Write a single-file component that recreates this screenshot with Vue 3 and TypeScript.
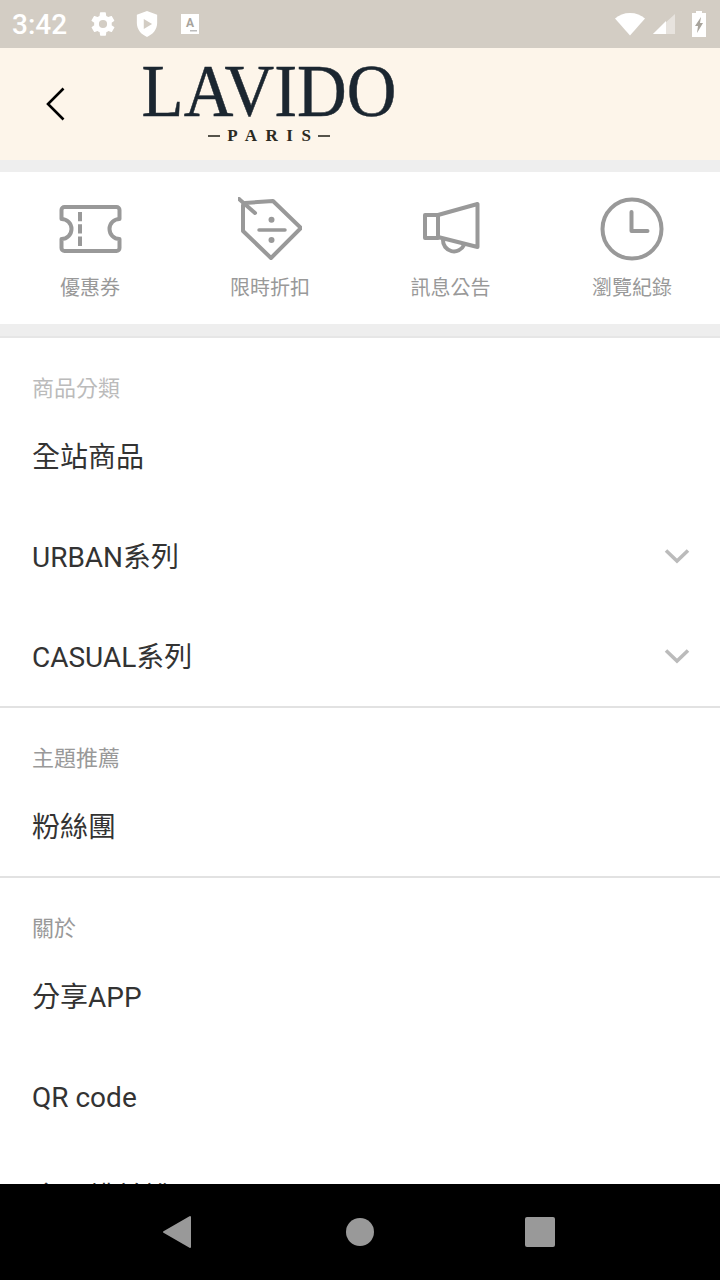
<template>
  <div class="screen">
    <div class="status-bar">
      <span class="clock">3:42</span>
      <svg class="st-icon" width="28" height="28" viewBox="0 0 24 24"><path fill="#fff" fill-rule="evenodd" d="M19.4 13c.1-.3.1-.7.1-1s0-.7-.1-1l2.1-1.6c.2-.2.2-.4.1-.6l-2-3.5c-.1-.2-.4-.3-.6-.2l-2.5 1c-.5-.4-1.100-.7-1.700-1L14.400 2.400c0-.2-.2-.4-.5-.4h-4c-.2 0-.4.2-.5.4l-.4 2.700c-.6.2-1.100.6-1.700 1l-2.500-1c-.2-.1-.5 0-.6.2l-2 3.500c-.1.2-.1.5.1.6L4.500 11c0 .3-.1.7-.1 1s0 .7.1 1l-2.100 1.600c-.2.2-.2.4-.1.6l2 3.500c.1.2.4.3.6.2l2.500-1c.5.4 1.100.7 1.700 1l.4 2.700c0 .2.2.4.5.4h4c.2 0 .5-.2.5-.4l.4-2.700c.6-.2 1.100-.6 1.700-1l2.500 1c.2.1.5 0 .6-.2l2-3.500c.1-.2.1-.5-.1-.6L19.400 13zM12 15.500a3.500 3.500 0 1 1 0-7 3.500 3.500 0 0 1 0 7z"/></svg>
      <svg class="st-icon shield" width="24" height="30" viewBox="0 0 26 30"><path fill="#fff" fill-rule="evenodd" d="M13 1 2 5v9c0 7 4.700 12.500 11 15 6.300-2.500 11-8 11-15V5L13 1zM9.500 9.500 18.500 15l-9 5.500v-11z"/></svg>
      <svg class="st-icon" width="18" height="20" viewBox="0 0 18 20"><rect width="18" height="20" fill="#fff"/><text x="9" y="13" text-anchor="middle" class="glyph-a">A</text><rect x="9" y="16" width="7" height="1.500" fill="#bbb"/></svg>
      <div class="st-right">
        <svg width="32" height="24" viewBox="0 0 32 24"><path fill="#fff" d="M16 23.500 1 6.500C5 3 10 1 16 1s11 2 15 5.500L16 23.500z"/></svg>
        <svg width="24" height="22" viewBox="0 0 24 22"><path fill="#fff" fill-opacity=".45" d="M23 1v20H1L23 1z"/><path fill="#fff" d="M1 21 14 8v13z"/></svg>
        <svg class="battery" width="14" height="28" viewBox="0 0 14 28"><path fill="#fff" d="M4 1h6v2h4v24H0V3h4V1z"/><path fill="#a8a49c" d="M9 7 3 16h3l-1 7 6-10H8l1-6z"/></svg>
      </div>
    </div>

    <header class="top-bar">
      <svg class="back" width="20" height="34" viewBox="0 0 20 34"><path d="M17.500 1.500 2 17l15.500 15.500" fill="none" stroke="#000" stroke-width="2.600"/></svg>
      <div class="logo">
        <div class="logo-main">LAVIDO</div>
        <div class="logo-sub"><i></i><span>PARIS</span><i></i></div>
      </div>
    </header>

    <nav class="shortcuts">
      <div class="shortcut">
        <svg width="64" height="64" viewBox="0 0 64 64" fill="none" stroke="#999" stroke-width="4" stroke-linejoin="round">
          <path d="M6 10h52a3 3 0 0 1 3 3v9a10 10 0 0 0 0 20v9a3 3 0 0 1-3 3H6a3 3 0 0 1-3-3v-9a10 10 0 0 0 0-20v-9a3 3 0 0 1 3-3z" transform="translate(.5 0)"/>
          <path d="M22 15v34" stroke-dasharray="9.300 3"/>
        </svg>
        <span>優惠券</span>
      </div>
      <div class="shortcut">
        <svg width="64" height="64" viewBox="0 0 64 64" fill="none" stroke="#999" stroke-width="4" stroke-linecap="round" stroke-linejoin="round">
          <path d="M1 2 17 16"/>
          <path d="M7 6 35 4 63 31 33 61 5 34V8"/>
          <path d="M21 33h26" stroke-width="3.500"/>
          <circle cx="33.500" cy="22.700" r="3" fill="#999" stroke="none"/>
          <circle cx="33.500" cy="43" r="3" fill="#999" stroke="none"/>
        </svg>
        <span>限時折扣</span>
      </div>
      <div class="shortcut">
        <svg width="64" height="64" viewBox="0 0 64 64" fill="none" stroke="#999" stroke-width="4" stroke-linejoin="round">
          <path d="M6 18h13v23H6z"/>
          <path d="M19 18 58.500 7v43L19 40"/>
          <path d="M24 43a11 11 0 0 0 21 5"/>
        </svg>
        <span>訊息公告</span>
      </div>
      <div class="shortcut">
        <svg width="64" height="64" viewBox="0 0 64 64" fill="none" stroke="#999" stroke-width="4" stroke-linecap="round" stroke-linejoin="round">
          <circle cx="32" cy="32" r="29.500"/>
          <path d="M31.500 15v19h16"/>
        </svg>
        <span>瀏覽紀錄</span>
      </div>
    </nav>

    <main class="menu">
      <section v-for="group in groups" :key="group.title" class="group">
        <h2 class="group-title">{{ group.title }}</h2>
        <div v-for="row in group.rows" :key="row.label" class="row">
          <span class="row-label">{{ row.label }}</span>
          <svg v-if="row.more" width="26" height="16" viewBox="0 0 26 16"><path d="M2 2.500 13 13 24 2.500" fill="none" stroke="#bbb" stroke-width="3.600"/></svg>
        </div>
      </section>
    </main>

    <footer class="nav-bar">
      <svg class="nav-back" width="30" height="34" viewBox="0 0 30 34"><path fill="#999" stroke="#999" stroke-width="2" stroke-linejoin="round" d="M28 2v30L2 17z"/></svg>
      <span class="nav-home"></span>
      <span class="nav-square"></span>
    </footer>
  </div>
</template>

<script setup lang="ts">
interface Row {
  label: string
  more?: boolean
}

interface Group {
  title: string
  rows: Row[]
}

const groups: Group[] = [
  {
    title: '商品分類',
    rows: [
      { label: '全站商品' },
      { label: 'URBAN系列', more: true },
      { label: 'CASUAL系列', more: true }
    ]
  },
  {
    title: '主題推薦',
    rows: [{ label: '粉絲團' }]
  },
  {
    title: '關於',
    rows: [{ label: '分享APP' }, { label: 'QR code' }, { label: '會員權益說明' }]
  }
]
</script>

<style>
html,
body {
  margin: 0;
  background: #fff;
}
</style>

<style scoped>
.screen {
  width: 720px;
  height: 1280px;
  display: flex;
  flex-direction: column;
  overflow: hidden;
  font-family: Roboto, "Noto Sans CJK TC", sans-serif;
  background: #eeeeee;
}

.status-bar {
  height: 48px;
  flex: none;
  display: flex;
  align-items: center;
  padding: 0 14px 0 12px;
  background: #d3cdc4;
  box-sizing: border-box;
}

.clock {
  font-size: 28px;
  font-weight: 500;
  color: #fff;
  width: 77px;
}

.st-icon {
  margin-right: 16px;
  flex: none;
}

.shield {
  margin-left: 2px;
  margin-right: 22px;
}

.glyph-a {
  font: 700 12px Roboto, sans-serif;
  fill: #a8a49c;
}

.st-right {
  margin-left: auto;
  display: flex;
  align-items: center;
  gap: 6px;
}

.battery {
  margin-left: 10px;
}

.top-bar {
  height: 112px;
  flex: none;
  display: flex;
  background: #fdf5ea;
  box-sizing: border-box;
  padding-left: 46px;
}

.back {
  margin-top: 39px;
  flex: none;
}

.logo {
  margin-left: 77px;
  width: 252px;
  display: flex;
  flex-direction: column;
  align-items: center;
}

.logo-main {
  font-family: "Liberation Serif", serif;
  font-size: 74px;
  line-height: 70px;
  margin-top: 8px;
  transform: scaleX(0.93);
  -webkit-text-stroke: 0.5px #1b2630;
  color: #1b2630;
  white-space: nowrap;
}

.logo-sub {
  display: flex;
  align-items: center;
  gap: 7px;
  font-family: "Liberation Serif", serif;
  font-weight: 700;
  font-size: 17px;
  line-height: 20px;
  letter-spacing: 8.500px;
  color: #2b2a22;
}

.logo-sub i {
  display: block;
  width: 12px;
  height: 2px;
  background: #55534a;
}

.logo-sub span {
  margin-right: -8.500px;
}

.shortcuts {
  margin-top: 12px;
  height: 152px;
  flex: none;
  display: grid;
  grid-template-columns: 180px 180px 181px 182px;
  background: #fff;
}

.shortcut {
  display: flex;
  flex-direction: column;
  align-items: center;
  padding-top: 25px;
  gap: 13px;
  font-size: 20px;
  line-height: 28px;
  color: #999;
}

.menu {
  flex: 1;
  min-height: 0;
  overflow: hidden;
  margin-top: 12px;
  border-top: 2px solid #e6e6e6;
  background: #fff;
}

.group + .group {
  border-top: 2px solid #e2e2e2;
}

.group-title {
  margin: 0;
  height: 68px;
  padding: 36px 32px 0;
  box-sizing: border-box;
  font-size: 22px;
  line-height: 30px;
  font-weight: 400;
  color: #999;
}

.group:first-child .group-title {
  color: #bbb;
}

.row {
  height: 100px;
  display: flex;
  align-items: center;
  justify-content: space-between;
  padding: 0 30px 0 32px;
  font-size: 28px;
  line-height: 36px;
  color: #333;
}

.row-label {
  padding-top: 4px;
}

.nav-bar {
  height: 96px;
  flex: none;
  background: #000;
  display: flex;
  align-items: center;
  justify-content: center;
  gap: 151px;
}

.nav-back {
  transform: translateX(-3px);
}

.nav-home {
  width: 28px;
  height: 28px;
  border-radius: 50%;
  background: #999;
}

.nav-square {
  width: 30px;
  height: 30px;
  border-radius: 2px;
  background: #999;
}
</style>
